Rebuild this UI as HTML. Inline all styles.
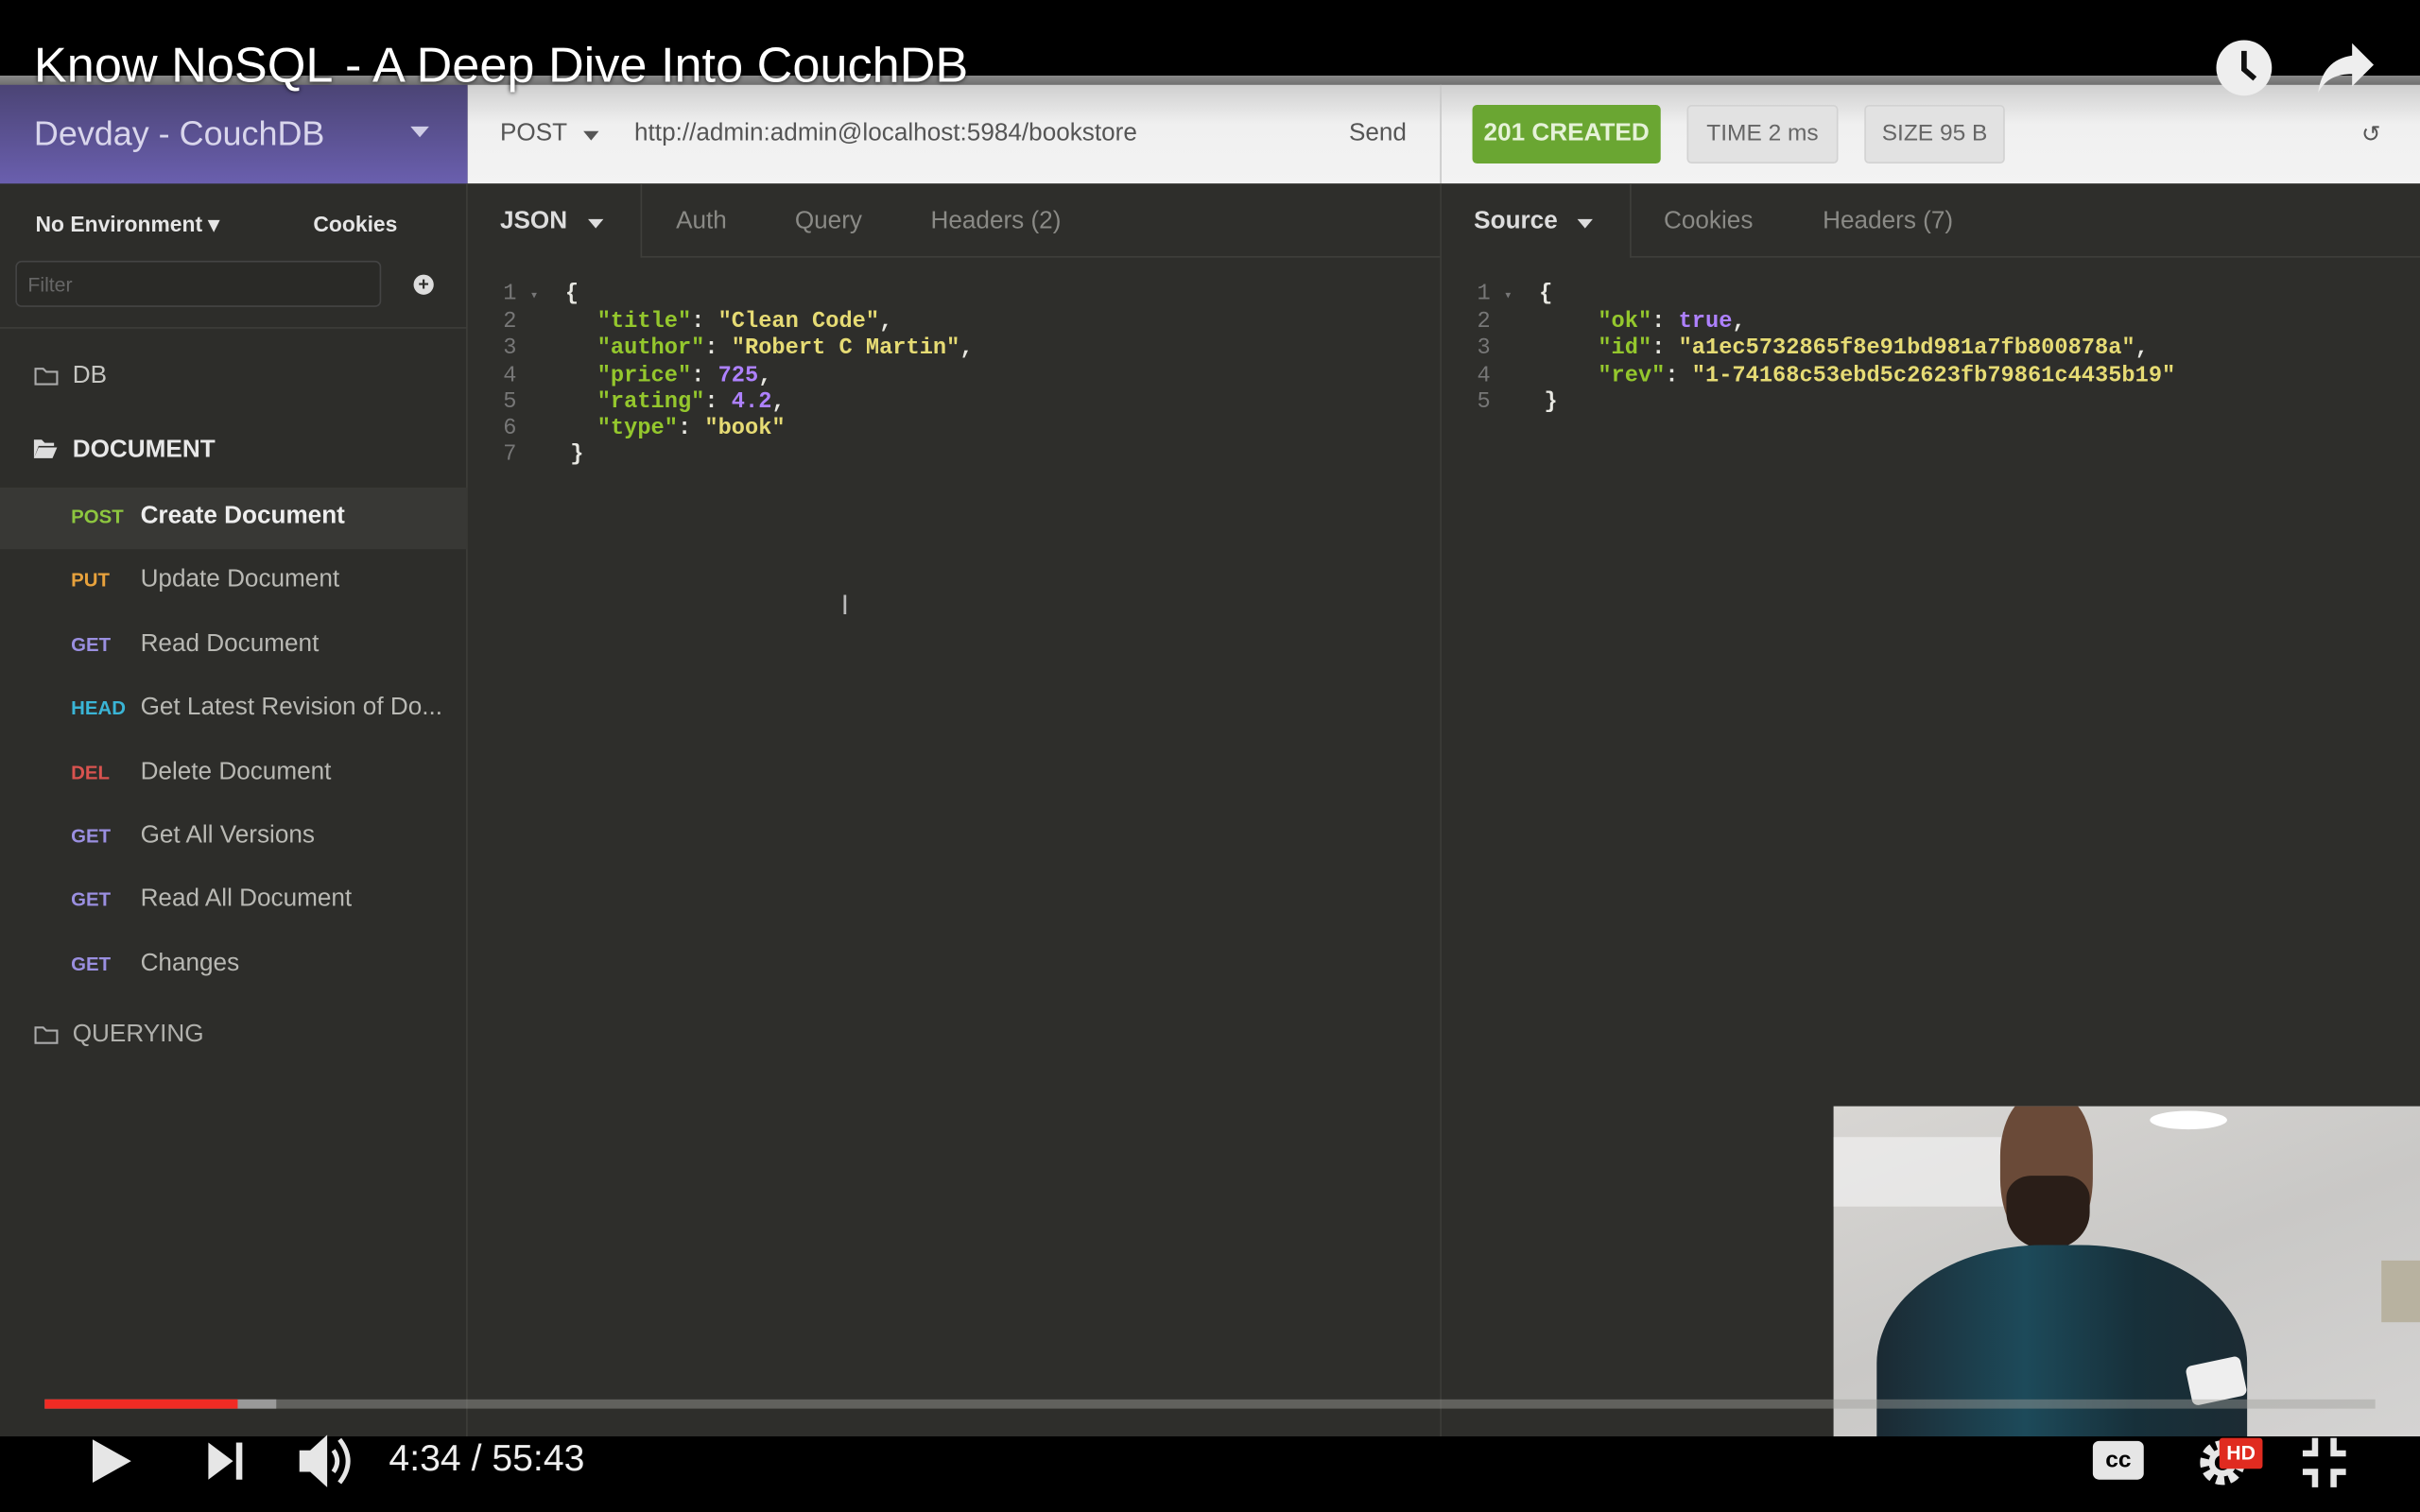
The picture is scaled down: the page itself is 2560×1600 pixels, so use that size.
<!DOCTYPE html>
<html><head><meta charset="utf-8"><style>
html,body{margin:0;padding:0;width:2560px;height:1600px;overflow:hidden;background:#000;}
#w{position:absolute;left:0;top:0;width:1568px;height:980px;transform:scale(1.632653);transform-origin:0 0;font-family:"Liberation Sans",sans-serif;overflow:hidden;background:#2d2d2a;}
.a{position:absolute;}
.mono{font-family:"Liberation Mono","DejaVu Sans Mono",monospace;}
.side .it{position:absolute;left:0;width:303px;height:40px;font-size:16px;color:#b9b9b4;}
.side .m{position:absolute;left:46px;top:12px;font-size:12.5px;font-weight:bold;}
.side .t{position:absolute;left:91px;top:10px;}
.code{font-size:14.5px;line-height:17.2px;white-space:pre;font-weight:bold;}
.k{color:#a6e22e;opacity:.85}.s{color:#e6db74}.n{color:#ae81ff}.p{color:#e8e8e2}
.ln{color:#777;font-weight:normal}
</style></head><body><div id="w">
<div class="a" style="left:0;top:0;width:1568px;height:49px;background:#000"></div>
<div class="a" style="left:0;top:49px;width:1568px;height:7px;background:linear-gradient(#8a8a8a,#6a6a6a)"></div>
<div class="a" style="left:0;top:55px;width:303px;height:64px;background:linear-gradient(#4b4475,#6a5fae)"></div>
<div class="a" style="left:303px;top:55px;width:1265px;height:64px;background:linear-gradient(#cfcfcf,#f0f0f0 40%,#f3f3f3)"></div>
<div class="a" style="left:933px;top:55px;width:1px;height:64px;background:#c8c8c8"></div>
<div class="a" style="left:22px;top:74px;font-size:22px;color:#d9d6ec">Devday - CouchDB</div>
<div class="a" style="left:266px;top:82px;width:0;height:0;border-left:6px solid transparent;border-right:6px solid transparent;border-top:7px solid #d0cde6"></div>
<div class="a" style="left:324px;top:78px;font-size:16px;color:#555">POST</div>
<div class="a" style="left:378px;top:85px;border-left:5px solid transparent;border-right:5px solid transparent;border-top:6px solid #555"></div>
<div class="a" style="left:411px;top:78px;font-size:16px;color:#555">http://admin:admin@localhost:5984/bookstore</div>
<div class="a" style="left:874px;top:78px;font-size:16px;color:#555">Send</div>
<div class="a" style="left:954px;top:68px;width:122px;height:38px;background:#6aa632;border-radius:3px;color:#e6f2d8;font-size:16px;font-weight:bold;text-align:center;line-height:38px">201 CREATED</div>
<div class="a" style="left:1093px;top:68px;width:98px;height:38px;background:#e2e2e2;border:1px solid #d2d2d2;box-sizing:border-box;border-radius:3px;color:#666;font-size:15px;text-align:center;line-height:36px">TIME 2 ms</div>
<div class="a" style="left:1208px;top:68px;width:91px;height:38px;background:#e2e2e2;border:1px solid #d2d2d2;box-sizing:border-box;border-radius:3px;color:#666;font-size:15px;text-align:center;line-height:36px">SIZE 95 B</div>
<div class="a" style="left:1530px;top:78px;font-size:15px;color:#555">↺</div>
<div class="a" style="left:22px;top:24px;font-size:32px;color:#fff;text-shadow:0 0 3px #000">Know NoSQL - A Deep Dive Into CouchDB</div>
<svg class="a" style="left:1434px;top:24px" width="40" height="40" viewBox="0 0 40 40"><circle cx="20" cy="20" r="18" fill="#eee"/><path d="M20 9v12l7 6" stroke="#111" stroke-width="3.5" fill="none"/></svg>
<svg class="a" style="left:1500px;top:26px" width="40" height="36" viewBox="0 0 40 36"><path d="M24 2l14 14-14 14v-8C14 22 7 25 2 34 4 20 11 12 24 10z" fill="#eee"/></svg>
<div class="a" style="left:303px;top:119px;width:1265px;height:812px;background:#2e2e2b"></div>
<div class="a" style="left:302px;top:119px;width:1px;height:812px;background:#3d3d39"></div>
<div class="a" style="left:933px;top:119px;width:1px;height:812px;background:#3d3d39"></div>
<div class="a" style="left:415px;top:166px;width:518px;height:1px;background:#3f3f3b"></div>
<div class="a" style="left:415px;top:119px;width:1px;height:48px;background:#3f3f3b"></div>
<div class="a" style="left:1056px;top:166px;width:512px;height:1px;background:#3f3f3b"></div>
<div class="a" style="left:1056px;top:119px;width:1px;height:48px;background:#3f3f3b"></div>
<div class="a" style="left:0;top:212px;width:303px;height:1px;background:#3d3d39"></div>
<div class="a" style="left:324px;top:135px;font-size:16px;color:#ddd;font-weight:bold">JSON</div>
<div class="a" style="left:381px;top:142px;border-left:5px solid transparent;border-right:5px solid transparent;border-top:6px solid #ddd"></div>
<div class="a" style="left:438px;top:135px;font-size:16px;color:#8a8a86">Auth</div>
<div class="a" style="left:515px;top:135px;font-size:16px;color:#8a8a86">Query</div>
<div class="a" style="left:603px;top:135px;font-size:16px;color:#8a8a86">Headers (2)</div>
<div class="a" style="left:955px;top:135px;font-size:16px;color:#ddd;font-weight:bold">Source</div>
<div class="a" style="left:1022px;top:142px;border-left:5px solid transparent;border-right:5px solid transparent;border-top:6px solid #ddd"></div>
<div class="a" style="left:1078px;top:135px;font-size:16px;color:#8a8a86">Cookies</div>
<div class="a" style="left:1181px;top:135px;font-size:16px;color:#8a8a86">Headers (7)</div>
<div class="a mono code" style="left:326px;top:183px"><span class="ln">1</span> <span class="ln" style="font-size:9px">▾</span>  <span class="p">{</span>
<span class="ln">2</span>      <span class="k">"title"</span><span class="p">: </span><span class="s">"Clean Code"</span><span class="p">,</span>
<span class="ln">3</span>      <span class="k">"author"</span><span class="p">: </span><span class="s">"Robert C Martin"</span><span class="p">,</span>
<span class="ln">4</span>      <span class="k">"price"</span><span class="p">: </span><span class="n">725</span><span class="p">,</span>
<span class="ln">5</span>      <span class="k">"rating"</span><span class="p">: </span><span class="n">4.2</span><span class="p">,</span>
<span class="ln">6</span>      <span class="k">"type"</span><span class="p">: </span><span class="s">"book"</span>
<span class="ln">7</span>    <span class="p">}</span></div>
<div class="a mono code" style="left:957px;top:183px"><span class="ln">1</span> <span class="ln" style="font-size:9px">▾</span>  <span class="p">{</span>
<span class="ln">2</span>        <span class="k">"ok"</span><span class="p">: </span><span class="n">true</span><span class="p">,</span>
<span class="ln">3</span>        <span class="k">"id"</span><span class="p">: </span><span class="s">"a1ec5732865f8e91bd981a7fb800878a"</span><span class="p">,</span>
<span class="ln">4</span>        <span class="k">"rev"</span><span class="p">: </span><span class="s">"1-74168c53ebd5c2623fb79861c4435b19"</span>
<span class="ln">5</span>    <span class="p">}</span></div>
<div class="a" style="left:545px;top:382px;font-size:18px;color:#bbb">I</div>
<div class="side">
<div class="a" style="left:23px;top:137px;font-size:14px;color:#e6e6e6;font-weight:bold">No Environment ▾</div>
<div class="a" style="left:203px;top:137px;font-size:14px;color:#e6e6e6;font-weight:bold">Cookies</div>
<div class="a" style="left:10px;top:169px;width:237px;height:30px;border:1px solid #444;border-radius:4px;box-sizing:border-box;background:#2a2a27"></div>
<div class="a" style="left:18px;top:177px;font-size:13px;color:#666">Filter</div>
<div class="a" style="left:268px;top:178px;width:13px;height:13px;border-radius:50%;background:#ddd;color:#2d2d2a;font-size:12px;line-height:13px;text-align:center;font-weight:bold">+</div>
<svg class="a" style="left:22px;top:237px" width="16" height="13"><path d="M1 2h5l2 2h7v8H1z" fill="none" stroke="#aaa" stroke-width="1.3"/></svg>
<div class="a" style="left:47px;top:235px;font-size:16px;color:#c6c6c2">DB</div>
<svg class="a" style="left:21px;top:284px" width="17" height="14"><path d="M1 1h5l2 2h6v2H4L1 13z M4 6h12l-3 7H1z" fill="#ddd"/></svg>
<div class="a" style="left:47px;top:283px;font-size:16px;color:#e8e8e8;font-weight:bold">DOCUMENT</div>
<div class="it" style="top:316px;background:#383835"><span class="m" style="color:#8dc63f">POST</span><span class="t" style="color:#eee;font-weight:bold">Create Document</span></div>
<div class="it" style="top:357px"><span class="m" style="color:#e8a23c">PUT</span><span class="t">Update Document</span></div>
<div class="it" style="top:399px"><span class="m" style="color:#9a8fe0">GET</span><span class="t">Read Document</span></div>
<div class="it" style="top:440px"><span class="m" style="color:#3ab5d6">HEAD</span><span class="t">Get Latest Revision of Do...</span></div>
<div class="it" style="top:482px"><span class="m" style="color:#d9534f">DEL</span><span class="t">Delete Document</span></div>
<div class="it" style="top:523px"><span class="m" style="color:#9a8fe0">GET</span><span class="t">Get All Versions</span></div>
<div class="it" style="top:564px"><span class="m" style="color:#9a8fe0">GET</span><span class="t">Read All Document</span></div>
<div class="it" style="top:606px"><span class="m" style="color:#9a8fe0">GET</span><span class="t">Changes</span></div>
<svg class="a" style="left:22px;top:664px" width="16" height="13"><path d="M1 2h5l2 2h7v8H1z" fill="none" stroke="#aaa" stroke-width="1.3"/></svg>
<div class="a" style="left:47px;top:662px;font-size:16px;color:#b0b0ac">QUERYING</div>
</div>
<div class="a" style="left:1188px;top:717px;width:380px;height:214px;overflow:hidden;background:linear-gradient(160deg,#d8d6d3,#c9c8c6 50%,#d4d3d2)">
<div class="a" style="left:0;top:20px;width:120px;height:45px;background:#efefef;opacity:.7"></div>
<div class="a" style="left:205px;top:3px;width:50px;height:12px;border-radius:50%;background:#fff"></div>
<div class="a" style="left:355px;top:100px;width:25px;height:40px;background:#b8b2a0"></div>
<div class="a" style="left:108px;top:-8px;width:60px;height:100px;border-radius:40% 40% 45% 45%;background:#6a4a38"></div>
<div class="a" style="left:112px;top:45px;width:54px;height:48px;border-radius:30% 30% 50% 50%;background:#2a1e18"></div>
<div class="a" style="left:28px;top:90px;width:240px;height:170px;border-radius:45% 45% 0 0;background:linear-gradient(90deg,#1b2a33,#1d4a5a 40%,#17303a 70%,#1c2b33)"></div>
<div class="a" style="left:230px;top:165px;width:36px;height:26px;background:#eee;transform:rotate(-12deg);border-radius:4px"></div>
</div>
<div class="a" style="left:29px;top:907px;width:1510px;height:6px;background:rgba(160,160,155,.45)"></div>
<div class="a" style="left:29px;top:907px;width:150px;height:6px;background:#999"></div>
<div class="a" style="left:29px;top:907px;width:125px;height:6px;background:#f12b24"></div>
<div class="a" style="left:0;top:931px;width:1568px;height:49px;background:#000"></div>
<svg class="a" style="left:58px;top:930px" width="30" height="34"><path d="M2 3L27 17 2 31z" fill="#e6e6e6"/></svg>
<svg class="a" style="left:134px;top:934px" width="26" height="26"><path d="M1 1l16 12L1 25z" fill="#e6e6e6"/><rect x="19" y="1" width="4" height="24" fill="#e6e6e6"/></svg>
<svg class="a" style="left:192px;top:928px" width="40" height="38"><path d="M2 12h7l11-10v34L9 26H2z" fill="#e6e6e6"/><path d="M24 12q5 7 0 14M28 5q11 14 0 28" stroke="#e6e6e6" stroke-width="3" fill="none"/></svg>
<div class="a" style="left:252px;top:932px;font-size:24px;color:#eee">4:34 / 55:43</div>
<div class="a" style="left:1356px;top:934px;width:33px;height:25px;background:#e6e6e6;border-radius:4px;color:#000;font-weight:bold;font-size:15px;text-align:center;line-height:25px">cc</div>
<svg class="a" style="left:1424px;top:928px" width="34" height="40" viewBox="0 0 34 40"><circle cx="16" cy="20" r="11" fill="none" stroke="#e6e6e6" stroke-width="7" stroke-dasharray="5 3"/><circle cx="16" cy="20" r="7" fill="none" stroke="#e6e6e6" stroke-width="4"/></svg>
<div class="a" style="left:1438px;top:932px;width:28px;height:20px;background:#e02b20;color:#fff;font-weight:bold;font-size:13px;text-align:center;line-height:20px;border-radius:2px">HD</div>
<svg class="a" style="left:1490px;top:930px" width="32" height="36"><path d="M10 2v10H2M22 2v10h8M10 34V24H2M22 34V24h8" stroke="#e6e6e6" stroke-width="4" fill="none"/></svg>
</div></body></html>
